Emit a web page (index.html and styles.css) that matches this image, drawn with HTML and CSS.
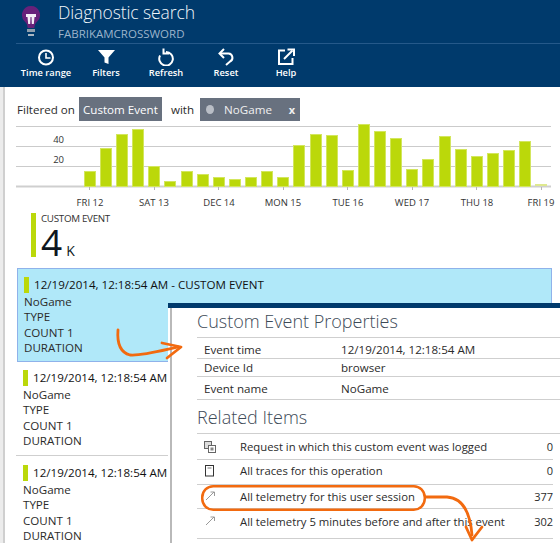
FILE: index.html
```html
<!DOCTYPE html>
<html lang="en">
<head>
<meta charset="utf-8">
<title>Diagnostic search</title>
<link rel="stylesheet" href="styles.css">
</head>
<body>
<div class="page">
  <header class="blade-head">
    <div class="title-row">
      <svg class="bulb" width="20" height="32" viewBox="0 0 20 32">
        <path d="M10 0a9 9 0 0 0-6 15.700c1.200 1.100 2.500 3 2.700 6.300h6.600c.2-3.300 1.500-5.200 2.700-6.300A9 9 0 0 0 10 0z" fill="#68217a"/>
        <path d="M5 8h10v3h-1.500l-.7 7h-2l-.3-7H9.500l-.3 7h-2l-.7-7H5z" fill="#f4eef6"/>
        <rect x="6" y="23" width="8" height="3" fill="#8f9eac"/>
        <rect x="7" y="28" width="6" height="2" fill="#aab6c2"/>
      </svg>
      <div class="titles">
        <div class="title">Diagnostic search</div>
        <div class="subtitle">FABRIKAMCROSSWORD</div>
      </div>
    </div>
    <nav class="toolbar">
      <div class="tool">
        <svg width="18" height="18" viewBox="0 0 18 18" fill="none" stroke="#fff" stroke-width="2"><circle cx="9" cy="9.500" r="7"/><path d="M9 5V10H13.500" stroke-width="1.600"/></svg>
        <span>Time range</span>
      </div>
      <div class="tool">
        <svg width="18" height="18" viewBox="0 0 18 18" fill="#fff"><path d="M1 2h17l-6.500 7.500V16l-4-1.500v-5z"/></svg>
        <span>Filters</span>
      </div>
      <div class="tool">
        <svg width="18" height="18" viewBox="0 0 18 18" fill="none" stroke="#fff" stroke-width="2"><path d="M9 4a6.800 6.800 0 1 1-5.900 3.500"/><path d="M6.500 0.500V5.500H12"/></svg>
        <span>Refresh</span>
      </div>
      <div class="tool">
        <svg width="18" height="18" viewBox="0 0 18 18" fill="none" stroke="#fff" stroke-width="2"><path d="M3 5.500h8.500a4.200 4.200 0 0 1 1.500 8L9 17"/><path d="M7 1L2.500 5.500 7 10"/></svg>
        <span>Reset</span>
      </div>
      <div class="tool">
        <svg width="18" height="18" viewBox="0 0 18 18" fill="none" stroke="#fff" stroke-width="2"><path d="M8 2.500H2V16h13.500v-6"/><path d="M7 11l8.500-8.500"/><path d="M10.500 1.500h6.500V8"/></svg>
        <span>Help</span>
      </div>
    </nav>
  </header>

  <main class="blade-body">
    <div class="filter-row">
      <span>Filtered on</span>
      <span class="chip chip-event">Custom Event</span>
      <span class="with">with</span>
      <span class="chip chip-value"><i class="info"></i><span class="chip-name">NoGame</span><b class="chip-x">x</b></span>
    </div>

    <svg class="chart" width="544" height="88" viewBox="16 122 544 88">
      <g stroke="#cbcbcb" stroke-width="1"><path d="M16 126.500H551M16 146.500H551M16 166.500H551"/></g>
      <path d="M16 186.500H551" stroke="#cfcfcf" stroke-width="2"/>
      <g fill="#bbd80a" stroke="#d3e65e" stroke-width="1">
        <rect x="84.500" y="171.500" width="11" height="15"/><rect x="100.500" y="148.500" width="11" height="38"/><rect x="116.500" y="134.500" width="11" height="52"/><rect x="132.500" y="129.500" width="11" height="57"/><rect x="148.500" y="166.500" width="11" height="20"/><rect x="164.500" y="181.500" width="11" height="5"/><rect x="181.500" y="171.500" width="11" height="15"/><rect x="197.500" y="174.500" width="11" height="12"/><rect x="213.500" y="177.500" width="11" height="9"/><rect x="229.500" y="179.500" width="11" height="7"/><rect x="245.500" y="177.500" width="11" height="9"/><rect x="261.500" y="171.500" width="11" height="15"/><rect x="277.500" y="177.500" width="11" height="9"/><rect x="293.500" y="145.500" width="11" height="41"/><rect x="310.500" y="134.500" width="11" height="52"/><rect x="326.500" y="135.500" width="11" height="51"/><rect x="342.500" y="170.500" width="11" height="16"/><rect x="358.500" y="124.500" width="11" height="62"/><rect x="374.500" y="131.500" width="11" height="55"/><rect x="390.500" y="138.500" width="11" height="48"/><rect x="406.500" y="169.500" width="11" height="17"/><rect x="422.500" y="159.500" width="11" height="27"/><rect x="439.500" y="136.500" width="11" height="50"/><rect x="455.500" y="149.500" width="11" height="37"/><rect x="471.500" y="156.500" width="11" height="30"/><rect x="487.500" y="153.500" width="11" height="33"/><rect x="503.500" y="150.500" width="11" height="36"/><rect x="519.500" y="141.500" width="11" height="45"/>
      </g>
      <rect x="535" y="184" width="12" height="2" fill="#dfe98f"/>
      <path d="M89.500 187v3M154.500 187v3M218.500 187v3M283.500 187v3M347.500 187v3M412.500 187v3M476.500 187v3M541.500 187v3" stroke="#b5b5b5"/>
      <g class="axis-y"><text x="64" y="143" text-anchor="end">40</text><text x="64" y="163" text-anchor="end">20</text></g>
      <g class="axis-x" text-anchor="middle">
        <text x="90" y="206">FRI 12</text><text x="154" y="206">SAT 13</text><text x="219" y="206">DEC 14</text><text x="283" y="206">MON 15</text><text x="348" y="206">TUE 16</text><text x="412" y="206">WED 17</text><text x="477" y="206">THU 18</text><text x="541" y="206">FRI 19</text>
      </g>
    </svg>

    <div class="metric">
      <div class="metric-bar"></div>
      <div class="metric-text">
        <div class="metric-label">CUSTOM EVENT</div>
        <div class="metric-value"><span class="big">4</span><span class="unit">K</span></div>
      </div>
    </div>

    <section class="list">
      <article class="row selected">
        <div class="row-title"><i class="mark"></i>12/19/2014, 12:18:54 AM - CUSTOM EVENT</div>
        <div>NoGame</div><div>TYPE</div><div>COUNT 1</div><div>DURATION</div>
      </article>
      <article class="row plain">
        <div class="row-title"><i class="mark"></i>12/19/2014, 12:18:54 AM</div>
        <div>NoGame</div><div>TYPE</div><div>COUNT 1</div><div>DURATION</div>
      </article>
      <article class="row plain">
        <div class="row-title"><i class="mark"></i>12/19/2014, 12:18:54 AM</div>
        <div>NoGame</div><div>TYPE</div><div>COUNT 1</div><div>DURATION</div>
      </article>
    </section>
  </main>

  <aside class="detail">
    <h2>Custom Event Properties</h2>
    <div class="props">
      <div class="prop"><span>Event time</span><span>12/19/2014, 12:18:54 AM</span></div>
      <div class="prop"><span>Device Id</span><span>browser</span></div>
      <div class="prop"><span>Event name</span><span>NoGame</span></div>
    </div>
    <h2 class="related-title">Related Items</h2>
    <div class="related">
      <div class="rel">
        <svg width="14" height="14" viewBox="0 0 14 14" fill="none" stroke="#666"><rect x="1.500" y="1.500" width="7" height="7" fill="#ddd"/><rect x="5.500" y="5.500" width="7" height="7" fill="#fff"/><rect x="7.500" y="7.500" width="3" height="3" fill="#888" stroke="none"/></svg>
        <span class="rel-text">Request in which this custom event was logged</span><span class="rel-num">0</span>
      </div>
      <div class="rel">
        <svg width="14" height="14" viewBox="0 0 14 14" fill="none" stroke="#333"><rect x="2.500" y="1.500" width="8" height="10.500"/><path d="M4.500 4h4" stroke="#777"/></svg>
        <span class="rel-text">All traces for this operation</span><span class="rel-num">0</span>
      </div>
      <div class="rel">
        <svg width="14" height="14" viewBox="0 0 14 14" fill="none" stroke="#999"><path d="M3 11L11 3M7.500 3H11.500V7"/></svg>
        <span class="rel-text">All telemetry for this user session</span><span class="rel-num">377</span>
      </div>
      <div class="rel">
        <svg width="14" height="14" viewBox="0 0 14 14" fill="none" stroke="#999"><path d="M3 11L11 3M7.500 3H11.500V7"/></svg>
        <span class="rel-text">All telemetry 5 minutes before and after this event</span><span class="rel-num">302</span>
      </div>
    </div>
  </aside>

  <svg class="notes" width="560" height="543" viewBox="0 0 560 543" fill="none" stroke="#f26a0f" stroke-linecap="round" stroke-linejoin="round">
    <path d="M118 330C117 342 119 352 130 355C142 356 160 351 178 347" stroke-width="2.800"/>
    <path d="M162 343L181 347L167 358" stroke-width="2.800"/>
    <rect x="202.250" y="486.250" width="222.500" height="23.500" rx="11" stroke-width="2.500"/>
    <path d="M426 497H447C462 498 470 510 472 535" stroke-width="2.800"/>
    <path d="M466 527L472 540L482 527" stroke-width="2.800"/>
  </svg>
</div>
</body>
</html>
```
FILE: styles.css
```css
* { box-sizing: border-box; }
html, body { margin: 0; padding: 0; background: #fff; }
body { font-family: "Open Sans", "Liberation Sans", sans-serif; font-size: 11.600px; color: #2b2b2b; }
.page { position: relative; width: 560px; height: 543px; overflow: hidden; background: #ececec; }

.blade-head { height: 87px; background: #003a6c; color: #fff; padding-left: 16px; }
.title-row { display: flex; height: 44px; border-bottom: 1px solid #25598a; }
.bulb { margin: 6px 0 0 5px; flex: none; }
.titles { margin-left: 17px; }
.title { font-size: 17.500px; font-weight: 300; line-height: 24px; letter-spacing: -0.100px; color: #f2f7fb; white-space: nowrap; }
.subtitle { font-size: 11.500px; line-height: 20px; color: #9cb4cb; }
.toolbar { display: flex; padding-top: 4px; }
.tool { width: 60px; display: flex; flex-direction: column; align-items: center; font-size: 9.300px; font-weight: 600; line-height: 14px; white-space: nowrap; }

.blade-body { margin-left: 3px; background: #fff; border-left: 2px solid #cfcfcf; height: 456px; padding-left: 11px; }
.filter-row { height: 35px; display: flex; align-items: center; padding: 9px 0 0 1px; }
.chip { background: #68717f; color: #fff; display: flex; align-items: center; }
.chip-event { height: 24px; width: 83px; margin-left: 4px; justify-content: center; }
.with { margin-left: 9px; margin-right: 6px; }
.chip-value { height: 23px; width: 100px; padding: 0 5px 0 6px; color: #f0f0f0; }
.info { width: 8px; height: 9px; border-radius: 50%; background: #b9bec6; flex: none; }
.chip-name { margin-left: 10px; flex: 1; }
.chip-x { font-size: 11px; font-weight: 700; }

.chart { display: block; }
.chart text { font-size: 9.500px; fill: #333; }
.metric { display: flex; margin: 3px 0 0 15px; height: 44px; }
.metric-bar { width: 5px; background: #bbd80a; flex: none; }
.metric-text { margin-left: 5px; }
.metric-label { font-size: 9.800px; line-height: 12px; letter-spacing: -0.300px; color: #333; }
.metric-value { display: flex; align-items: baseline; line-height: 30px; color: #0d1620; }
.big { font-size: 37px; line-height: 33px; font-weight: 500; }
.unit { font-size: 14px; margin-left: 4px; font-weight: 500; }

.list { margin: 11px 0 0 1px; width: 535px; line-height: 15.300px; }
.row { padding-left: 6px; }
.row-title { display: flex; align-items: center; height: 19px; color: #111; white-space: nowrap; }
.mark { width: 5px; height: 16px; background: #bbd80a; margin-right: 5px; flex: none; }
.selected { height: 94px; background: #b0e8f9; border: 1px solid #8fb2ea; padding-top: 6px; }
.plain { width: 152px; height: 94px; margin-left: -1px; padding: 6px 0 0 7px; border-bottom: 1px solid #cfcfcf; }
.plain + .plain { padding-top: 7px; border-bottom: 0; }

.detail { position: absolute; left: 168px; top: 303px; width: 392px; height: 240px; background: #fff; border-top: 5px solid #003a6c; padding-left: 29px; }
.detail::before { content: ""; position: absolute; left: 2px; top: 0; bottom: 0; width: 2px; background: #b9b9b9; }
.detail h2 { margin: 0; font-size: 18px; font-weight: 300; line-height: 27px; padding-bottom: 2px; color: #3d4a57; }
.props { border-top: 1px solid #cfcfcf; }
.prop { display: flex; height: 18px; align-items: center; border-bottom: 1px solid #cfcfcf; padding-left: 7px; }
.prop:nth-child(1) { height: 21px; padding-top: 2px; }
.prop:nth-child(3) { height: 23px; padding-top: 1px; }
.prop span:first-child { width: 137px; }
.detail .related-title { margin-top: 4px; padding-bottom: 2px; }
.related { border-top: 1px solid #cfcfcf; padding-right: 7px; }
.rel { display: flex; align-items: center; height: 25px; border-bottom: 1px solid #cfcfcf; }
.rel:nth-child(1) { height: 26px; }
.rel:nth-child(2) { padding-bottom: 3px; }
.rel:nth-child(3) { height: 24px; padding-bottom: 1px; }
.rel:nth-child(4) { height: 30px; padding-bottom: 5px; }
.rel svg { margin-left: 6px; flex: none; }
.rel-text { margin-left: 23px; flex: 1; white-space: nowrap; font-size: 11.300px; }
.rel-num { font-size: 11px; }
.notes { position: absolute; left: 0; top: 0; pointer-events: none; }
```
